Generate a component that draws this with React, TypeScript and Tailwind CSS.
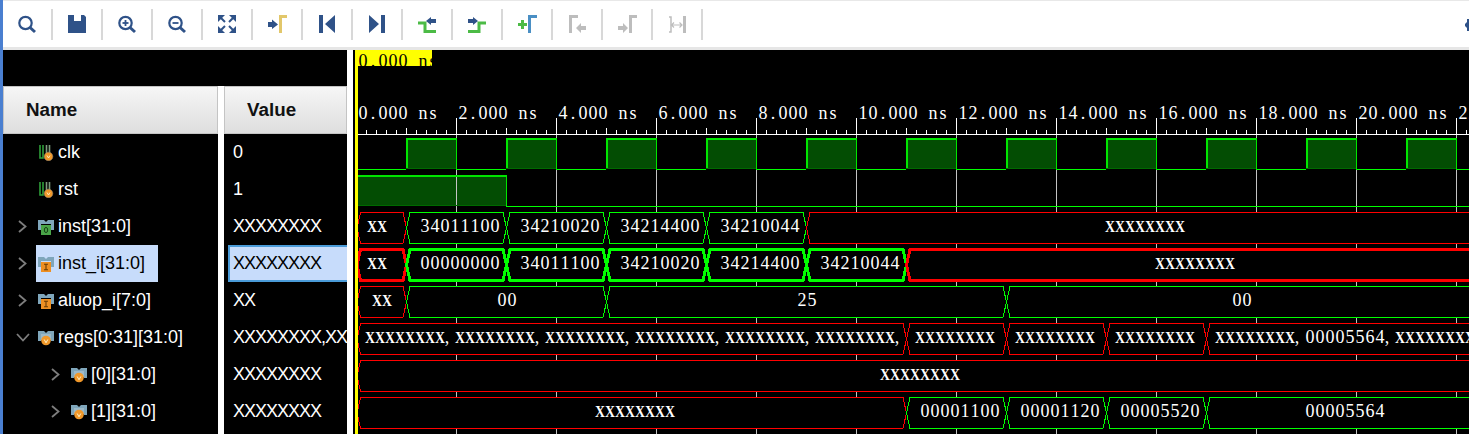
import React from 'react';

const NAVY = '#2f5288';
const GREY = '#bdbdbd';
const GREEN = '#4cbb46';
const WAVE_FONT = '"Liberation Serif", serif';

// every glyph of the wave font sits in a 10px cell, runs of X get squeezed to fit
const CellText = ({ x, y, text, fill = '#fff' }: { x: number; y: number; text: string; fill?: string }) => {
  let pos = x;
  const runs = text.split(/(X+)/).filter(Boolean);
  return (
    <g fill={fill} fontFamily={WAVE_FONT}>
      {runs.map((run, r) => {
        const start = pos;
        pos += run.length * 10;
        if (run[0] === 'X') {
          return (
            <text
              key={r}
              x={start}
              y={y}
              fontSize={17}
              fontWeight={700}
              textLength={run.length * 10}
              lengthAdjust="spacingAndGlyphs"
            >
              {run}
            </text>
          );
        }
        return (
          <text key={r} y={y} fontSize={18} textAnchor="middle">
            {run.split('').map((c, i) => (
              <tspan key={i} x={start + i * 10 + (c === ',' ? 2 : 5)}>
                {c}
              </tspan>
            ))}
          </text>
        );
      })}
    </g>
  );
};

type Seg = { from: number; to: number; color: string; label?: string; labelX?: number };

const R = '#ff0000';
const G = '#00ff00';
const END = 1500;

const Bus = ({ top, segs, thick }: { top: number; segs: Seg[]; thick?: boolean }) => {
  const t = top + 0.5;
  const b = top + 31.5;
  const m = top + 16;
  return (
    <g>
      {segs.map((s, i) => (
        <g key={i}>
          <polygon
            points={`${s.from},${m} ${s.from + 3.5},${t} ${s.to - 3.5},${t} ${s.to},${m} ${s.to - 3.5},${b} ${s.from + 3.5},${b}`}
            fill="#000"
            stroke={s.color}
            strokeWidth={thick ? 3 : 1}
            shapeRendering="crispEdges"
          />
          {s.label && <CellText x={s.labelX ?? 0} y={top + 20} text={s.label} />}
        </g>
      ))}
    </g>
  );
};

const X8 = 'XXXXXXXX';

const buses: { top: number; thick?: boolean; segs: Seg[] }[] = [
  {
    top: 212,
    segs: [
      { from: 357, to: 406.5, color: R, label: 'XX', labelX: 367 },
      { from: 406.5, to: 506.5, color: G, label: '34011100', labelX: 420 },
      { from: 506.5, to: 606.5, color: G, label: '34210020', labelX: 520 },
      { from: 606.5, to: 706.5, color: G, label: '34214400', labelX: 620 },
      { from: 706.5, to: 806.5, color: G, label: '34210044', labelX: 720 },
      { from: 806.5, to: END, color: R, label: X8, labelX: 1105 },
    ],
  },
  {
    top: 249,
    thick: true,
    segs: [
      { from: 357, to: 406.5, color: R, label: 'XX', labelX: 367 },
      { from: 406.5, to: 506.5, color: G, label: '00000000', labelX: 420 },
      { from: 506.5, to: 606.5, color: G, label: '34011100', labelX: 520 },
      { from: 606.5, to: 706.5, color: G, label: '34210020', labelX: 620 },
      { from: 706.5, to: 806.5, color: G, label: '34214400', labelX: 720 },
      { from: 806.5, to: 906.5, color: G, label: '34210044', labelX: 820 },
      { from: 906.5, to: END, color: R, label: X8, labelX: 1155 },
    ],
  },
  {
    top: 286,
    segs: [
      { from: 357, to: 406.5, color: R, label: 'XX', labelX: 372 },
      { from: 406.5, to: 606.5, color: G, label: '00', labelX: 497 },
      { from: 606.5, to: 1006.5, color: G, label: '25', labelX: 797 },
      { from: 1006.5, to: END, color: G, label: '00', labelX: 1232 },
    ],
  },
  {
    top: 323,
    segs: [
      { from: 357, to: 906.5, color: R, label: Array(6).fill(X8).join(',') + ',', labelX: 365 },
      { from: 906.5, to: 1006.5, color: R, label: X8, labelX: 915 },
      { from: 1006.5, to: 1106.5, color: R, label: X8, labelX: 1015 },
      { from: 1106.5, to: 1206.5, color: R, label: X8, labelX: 1115 },
      { from: 1206.5, to: END, color: R, label: `${X8},00005564,${X8}`, labelX: 1215 },
    ],
  },
  { top: 360, segs: [{ from: 357, to: END, color: R, label: X8, labelX: 880 }] },
  {
    top: 397,
    segs: [
      { from: 357, to: 906.5, color: R, label: X8, labelX: 595 },
      { from: 906.5, to: 1006.5, color: G, label: '00001100', labelX: 920 },
      { from: 1006.5, to: 1106.5, color: G, label: '00001120', labelX: 1020 },
      { from: 1106.5, to: 1206.5, color: G, label: '00005520', labelX: 1120 },
      { from: 1206.5, to: END, color: G, label: '00005564', labelX: 1305 },
    ],
  },
];

const range = (n: number) => Array.from({ length: n }, (_, i) => i);

const Waves = () => {
  const clkHighs = range(11).map((i) => 406 + i * 100);
  return (
    <svg width={1116} height={384} viewBox="353 50 1116 384" className="block shrink-0">
      <rect x={353} y={50} width={1116} height={384} fill="#000" />

      {/* filled high levels go under the grid */}
      {clkHighs.map((x) => (
        <rect key={x} x={x} y={138} width={50} height={31} fill="#034d03" />
      ))}
      <rect x={357} y={175} width={149} height={31} fill="#034d03" />

      {/* grid */}
      {range(11).map((i) => (
        <g key={i} shapeRendering="crispEdges">
          <line x1={456.5 + i * 100} x2={456.5 + i * 100} y1={118} y2={134} stroke="#fff" />
          <line x1={456.5 + i * 100} x2={456.5 + i * 100} y1={134} y2={434} stroke="#c4c4c4" />
        </g>
      ))}

      {/* ruler */}
      <line x1={357} x2={1469} y1={134.5} y2={134.5} stroke="#fff" shapeRendering="crispEdges" />
      {range(112).map((i) => {
        const x = 366.5 + i * 10;
        return (
          <line
            key={i}
            x1={x}
            x2={x}
            y1={(i + 1) % 5 === 0 ? 128 : 130}
            y2={134}
            stroke="#fff"
            shapeRendering="crispEdges"
          />
        );
      })}
      {range(12).map((i) => (
        <CellText key={i} x={358 + i * 100} y={119} text={`${i * 2}.000 ns`} />
      ))}

      {/* clk */}
      <g shapeRendering="crispEdges" fill="none">
        {clkHighs.map((x) => (
          <g key={x}>
            <path d={`M${x + 1} 169V139H${x + 50}`} stroke="#00e600" strokeWidth={2} />
            <line x1={x + 50.5} x2={x + 50.5} y1={138} y2={169} stroke="#00e600" />
            <line x1={x} x2={x + 50} y1={168.5} y2={168.5} stroke="#006a00" />
            <line x1={x + 50} x2={x + 100} y1={169.5} y2={169.5} stroke={G} />
          </g>
        ))}
        <line x1={357} x2={406} y1={169.5} y2={169.5} stroke={G} />

        {/* rst */}
        <path d="M357 176H506" stroke="#00e600" strokeWidth={2} />
        <line x1={506.5} x2={506.5} y1={175} y2={206} stroke="#00e600" />
        <line x1={357} x2={506} y1={205.5} y2={205.5} stroke="#006a00" />
        <line x1={506} x2={1469} y1={206.5} y2={206.5} stroke={G} />
      </g>

      {buses.map((b) => (
        <Bus key={b.top} top={b.top} segs={b.segs} thick={b.thick} />
      ))}

      {/* cursor */}
      <rect x={355} y={50} width={3} height={384} fill="#ffff00" />
      <rect x={356} y={50} width={76} height={16} fill="#ffff00" />
      <clipPath id="flag">
        <rect x={356} y={50} width={76} height={16} />
      </clipPath>
      <g clipPath="url(#flag)">
        <CellText x={358} y={67} text="0.000 ns" fill="#000" />
      </g>
    </svg>
  );
};

const Lens = ({ mark }: { mark?: 'plus' | 'minus' }) => (
  <svg width={20} height={20} viewBox="0 0 20 20">
    <circle cx={8.5} cy={9} r={6.2} fill="none" stroke={NAVY} strokeWidth={2.2} />
    <path d="M13 13.5L18 18" stroke={NAVY} strokeWidth={3} />
    {mark && <path d="M5.5 9H11.5" stroke={NAVY} strokeWidth={1.8} />}
    {mark === 'plus' && <path d="M8.5 6V12" stroke={NAVY} strokeWidth={1.8} />}
  </svg>
);

const Icon20 = ({ children }: { children: React.ReactNode }) => (
  <svg width={20} height={20} viewBox="0 0 20 20">
    {children}
  </svg>
);

const toolbarIcons: React.ReactNode[] = [
  <Lens key="search" />,
  <Icon20 key="save">
    <path d="M1 1H7V7H14V1H17L19 3V19H1Z" fill={NAVY} />
  </Icon20>,
  <Lens key="in" mark="plus" />,
  <Lens key="out" mark="minus" />,
  <Icon20 key="fit">
    <g fill={NAVY}>
      <path d="M1 1H8L1 8Z" />
      <path d="M19 1H12L19 8Z" />
      <path d="M1 19H8L1 12Z" />
      <path d="M19 19H12L19 12Z" />
    </g>
    <path d="M4 4L8 8M16 4L12 8M4 16L8 12M16 16L12 12" stroke={NAVY} strokeWidth={2} />
  </Icon20>,
  <Icon20 key="goto">
    <path d="M1 8H5V5.5L11 10.5L5 15V13H1Z" fill={NAVY} />
    <path d="M13.5 19V2.5H20" fill="none" stroke="#e2c76a" strokeWidth={3} />
  </Icon20>,
  <Icon20 key="first">
    <path d="M2 1H6V19H2ZM18 1V19L8 10Z" fill={NAVY} />
  </Icon20>,
  <Icon20 key="last">
    <path d="M14 1H18V19H14ZM2 1V19L12 10Z" fill={NAVY} />
  </Icon20>,
  <Icon20 key="prev">
    <path d="M1 9H8V17.5H19" fill="none" stroke={GREEN} strokeWidth={3} />
    <path d="M9 7L14 3V5H19V9H14V11Z" fill={NAVY} />
  </Icon20>,
  <Icon20 key="next">
    <path d="M1 17.5H12V9H19" fill="none" stroke={GREEN} strokeWidth={3} />
    <path d="M11 7L6 3V5H1V9H6V11Z" fill={NAVY} />
  </Icon20>,
  <Icon20 key="add">
    <path d="M5.5 6V15M1 10.5H10" stroke={GREEN} strokeWidth={3} />
    <path d="M12.5 19V2.5H20" fill="none" stroke="#4a8fc4" strokeWidth={3} />
  </Icon20>,
  <Icon20 key="prevm">
    <path d="M3.5 19V2.5H11" fill="none" stroke={GREY} strokeWidth={3} />
    <path d="M9 14L14 9V12H19V16H14V19Z" fill={GREY} />
  </Icon20>,
  <Icon20 key="nextm">
    <path d="M1 12H6V9L11 14L6 19V16H1Z" fill={GREY} />
    <path d="M13.5 19V2.5H20" fill="none" stroke={GREY} strokeWidth={3} />
  </Icon20>,
  <Icon20 key="swap">
    <path d="M2 3H4V18H2" fill="none" stroke={GREY} strokeWidth={1.5} />
    <rect x={16} y={2} width={3} height={17} fill={GREY} />
    <path d="M4 11H15M7 8.5L4.5 11L7 13.5M12.5 8.5L15 11L12.5 13.5" fill="none" stroke={GREY} strokeWidth={1.2} />
  </Icon20>,
];

const Toolbar = () => (
  <div className="flex h-[47px] items-center justify-between border-t border-[#e8e8e8] bg-white">
    <div className="flex items-center">
      {toolbarIcons.map((icon, i) => (
        <React.Fragment key={i}>
          <div className="flex w-[48px] justify-center">{icon}</div>
          <div className="h-[31px] w-[2px] bg-[#d8d8d8]" />
        </React.Fragment>
      ))}
    </div>
    <svg width={4} height={12} viewBox="0 0 4 12" className="mt-[1px]">
      <path d="M2 0H4V12H2V9L0 7V5L2 3Z" fill={NAVY} />
    </svg>
  </div>
);

type Kind = 'bit' | 'green' | 'orange' | 'array';

const SignalIcon = ({ kind }: { kind: Kind }) => {
  if (kind === 'bit') {
    return (
      <svg width={16} height={16} viewBox="0 0 16 16" className="shrink-0">
        <path d="M2 0V13H5V0" fill="none" stroke="#2f9e3a" strokeWidth={1.6} />
        <path d="M8.5 0V8M11.5 0V8" stroke="#7c9a7c" strokeWidth={1.6} />
        <circle cx={10.5} cy={11.5} r={4.3} fill="#f0982a" stroke="#9a8a70" strokeWidth={0.6} />
        <path d="M9 10.5L10.5 13L12 10.5" fill="none" stroke="#fff2c8" strokeWidth={0.9} />
      </svg>
    );
  }
  return (
    <svg width={16} height={16} viewBox="0 0 16 16" className="shrink-0">
      <path d="M0 1H6L8 3L10 1H16V11H13V5H3V11H0Z" fill="#7fa6bb" />
      {kind === 'array' ? (
        <>
          <path d="M3 4H13V10H3Z" fill="#9db9c8" />
          <circle cx={8} cy={10.5} r={4.8} fill="#f0982a" />
          <path d="M6.2 9.5L8 12.8L9.8 9.5" fill="none" stroke="#fff2c8" strokeWidth={1} />
        </>
      ) : (
        <>
          <rect x={3} y={6} width={10} height={10} fill={kind === 'green' ? '#4aa548' : '#ee8f22'} />
          {kind === 'green' ? (
            <ellipse cx={8} cy={11} rx={1.7} ry={2.6} fill="none" stroke="#163f16" strokeWidth={1} />
          ) : (
            <path d="M6 8.2H10M8 8.2V13.8M6 13.8H10" fill="none" stroke="#6b3c05" strokeWidth={1.1} />
          )}
        </>
      )}
    </svg>
  );
};

const Chevron = ({ open }: { open?: boolean }) =>
  open ? (
    <svg width={14} height={9} viewBox="0 0 14 9" className="-ml-[2px]">
      <path d="M1 1L7 7.5L13 1" fill="none" stroke="#7d7d7d" strokeWidth={1.8} />
    </svg>
  ) : (
    <svg width={9} height={13} viewBox="0 0 9 13">
      <path d="M1 1L7.5 6.5L1 12" fill="none" stroke="#7d7d7d" strokeWidth={1.8} />
    </svg>
  );

type Signal = {
  name: string;
  value: string;
  kind: Kind;
  depth: number;
  arrow?: 'right' | 'down';
  selected?: boolean;
};

const signals: Signal[] = [
  { name: 'clk', value: '0', kind: 'bit', depth: 0 },
  { name: 'rst', value: '1', kind: 'bit', depth: 0 },
  { name: 'inst[31:0]', value: X8, kind: 'green', depth: 0, arrow: 'right' },
  { name: 'inst_i[31:0]', value: X8, kind: 'orange', depth: 0, arrow: 'right', selected: true },
  { name: 'aluop_i[7:0]', value: 'XX', kind: 'orange', depth: 0, arrow: 'right' },
  { name: 'regs[0:31][31:0]', value: `${X8},${X8},${X8}`, kind: 'array', depth: 0, arrow: 'down' },
  { name: '[0][31:0]', value: X8, kind: 'array', depth: 1, arrow: 'right' },
  { name: '[1][31:0]', value: X8, kind: 'array', depth: 1, arrow: 'right' },
];

const HeaderCell = ({ label }: { label: string }) => (
  <div className="flex h-[48px] items-center border border-[#c4c4c4] bg-gradient-to-b from-[#f6f6f6] to-[#dedede] pl-[22px] text-[18.8px] font-bold text-[#111]">
    {label}
  </div>
);

const NameRow = ({ s }: { s: Signal }) => (
  <div className={`flex h-[37px] items-center ${s.depth === 1 ? 'pl-[48px]' : 'pl-[15px]'}`}>
    <div className="flex w-[18px] shrink-0 items-center">
      {s.arrow && <Chevron open={s.arrow === 'down'} />}
    </div>
    <div
      className={`flex h-full items-center gap-[4px] pl-[2px] ${s.selected ? 'w-[122px] bg-[#c7dcfb] text-black' : 'text-white'}`}
    >
      <SignalIcon kind={s.kind} />
      <span className="whitespace-nowrap">{s.name}</span>
    </div>
  </div>
);

const ValueRow = ({ s }: { s: Signal }) =>
  s.selected ? (
    <div className="h-[37px] pl-[4px]">
      <div className="flex h-full items-center border-y-2 border-l-2 border-[#4a9bd8] bg-[#c7dcfb] pl-[3px] tracking-[-1px] text-black">
        {s.value}
      </div>
    </div>
  ) : (
    <div className="flex h-[37px] items-center overflow-hidden whitespace-nowrap pl-[9px] tracking-[-1px] text-white">
      {s.value}
    </div>
  );

export default function App() {
  return (
    <div className="flex h-[434px] w-[1469px] overflow-hidden bg-white font-['Liberation_Sans',sans-serif] text-[18px]">
      <div className="w-[3px] shrink-0 bg-[#4a7fd0]" />
      <div className="flex min-w-0 flex-1 flex-col">
        <Toolbar />
        <div className="h-[3px] bg-[#e6e6e6]" />
        <div className="flex min-h-0 flex-1">
          <div className="flex w-[344px] shrink-0 flex-col">
            <div className="h-[36px] bg-black" />
            <div className="flex flex-1 gap-[6px] bg-white">
              <div className="w-[215px] overflow-hidden bg-black">
                <HeaderCell label="Name" />
                {signals.map((s) => (
                  <NameRow key={s.name} s={s} />
                ))}
              </div>
              <div className="w-[123px] overflow-hidden bg-black">
                <HeaderCell label="Value" />
                {signals.map((s) => (
                  <ValueRow key={s.name} s={s} />
                ))}
              </div>
            </div>
          </div>
          <div className="w-[6px] shrink-0 bg-white" />
          <Waves />
        </div>
      </div>
    </div>
  );
}
